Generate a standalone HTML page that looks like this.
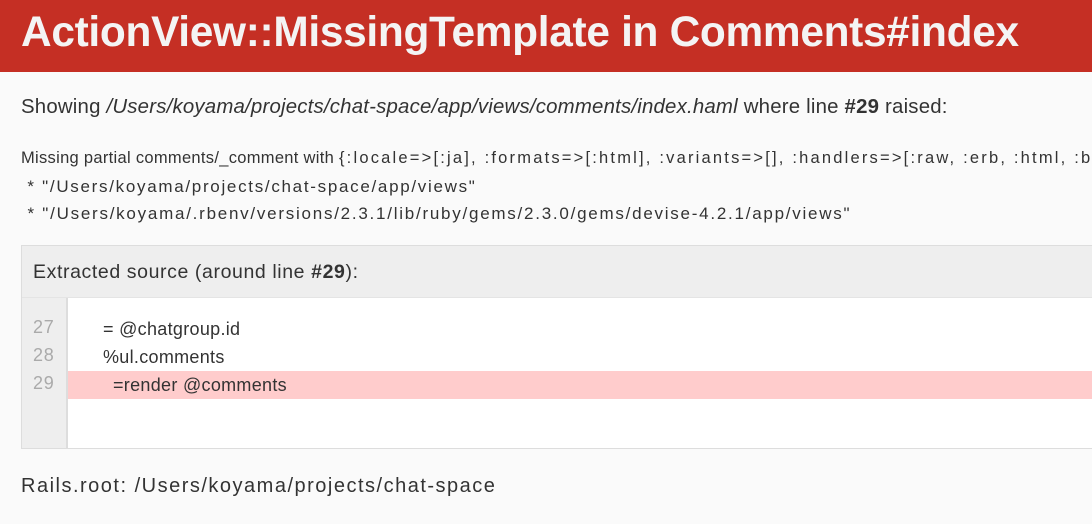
<!DOCTYPE html>
<html><head><style>
body{margin:0;background:#fafafa;font-family:"Liberation Sans",sans-serif;color:#333;width:1092px;height:524px;overflow:hidden;position:relative;}
header{background:#c52f24;height:72px;position:relative;}
h1{margin:0;position:absolute;left:21px;top:8px;color:#f4f4f4;font-size:42.4px;font-weight:bold;letter-spacing:-0.3px;white-space:nowrap;}
.t{position:absolute;left:21px;white-space:nowrap;}
.box{position:absolute;left:21px;top:245px;width:1090px;height:202px;border:1px solid #ddd;background:#eee;}
.hd{height:51px;line-height:52px;padding-left:11px;font-size:19.5px;letter-spacing:0.6px;border-bottom:1px solid #e4e4e4;}
.gut{position:absolute;left:0;top:52px;width:44px;bottom:0;background:#eee;border-right:2px solid #ddd;}
.code{position:absolute;left:46px;top:52px;right:0;bottom:0;background:#fff;}
.ln{position:absolute;left:11px;font-size:18px;color:#aaa;letter-spacing:0.8px;}
.cl{position:absolute;left:0;right:0;height:28px;line-height:28px;font-size:18px;letter-spacing:0.3px;}
</style></head><body>
<header><h1>ActionView::MissingTemplate in Comments#index</h1></header>
<div class="t" style="top:96px;font-size:20.4px;letter-spacing:0.2px">Showing <i>/Users/koyama/projects/chat-space/app/views/comments/index.haml</i> where line <b>#29</b> raised:</div>
<div class="t" style="top:149px;font-size:16.5px;letter-spacing:0.3px">Missing partial comments/_comment with <span style="letter-spacing:2.2px">{:locale=&gt;[:ja], :formats=&gt;[:html], :variants=&gt;[], :handlers=&gt;[:raw, :erb, :html, :builder, :ruby, :coffee, :haml]}. Searched in:</span></div>
<div class="t" style="top:177px;font-size:17px;letter-spacing:1.7px">&nbsp;* "/Users/koyama/projects/chat-space/app/views"</div>
<div class="t" style="top:204px;font-size:17px;letter-spacing:1.75px">&nbsp;* "/Users/koyama/.rbenv/versions/2.3.1/lib/ruby/gems/2.3.0/gems/devise-4.2.1/app/views"</div>
<div class="box">
<div class="hd">Extracted source (around line <b>#29</b>):</div>
<div class="gut"><div class="ln" style="top:19px">27</div><div class="ln" style="top:47px">28</div><div class="ln" style="top:75px">29</div></div>
<div class="code">
<div class="cl" style="top:17px;padding-left:35px">= @chatgroup.id</div>
<div class="cl" style="top:45px;padding-left:35px">%ul.comments</div>
<div class="cl" style="top:73px;padding-left:45px;background:#fcc">=render @comments</div>
</div></div>
<div class="t" style="top:475px;font-size:20px;letter-spacing:1.5px">Rails.root: /Users/koyama/projects/chat-space</div>
</body></html>
